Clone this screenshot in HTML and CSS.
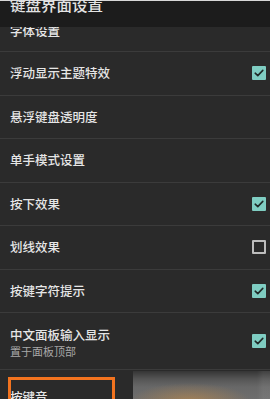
FILE: index.html
```html
<!DOCTYPE html>
<html lang="zh">
<head>
<meta charset="utf-8">
<link rel="stylesheet" href="styles.css">
</head>
<body>
<div class="screen">
  <div class="header"><div class="title">键盘界面设置</div></div>
  <div class="list">
    <div class="row first"><span class="label">字体设置</span></div>
    <div class="row"><span class="label">浮动显示主题特效</span><span class="box checked"><svg viewBox="0 0 14 14"><path d="M3.2 7.2 L5.8 9.6 L10.8 4.4" fill="none" stroke="#1f2a28" stroke-width="1.6" stroke-linecap="round" stroke-linejoin="round"/></svg></span></div>
    <div class="row"><span class="label">悬浮键盘透明度</span></div>
    <div class="row"><span class="label">单手模式设置</span></div>
    <div class="row"><span class="label">按下效果</span><span class="box checked"><svg viewBox="0 0 14 14"><path d="M3.2 7.2 L5.8 9.6 L10.8 4.4" fill="none" stroke="#1f2a28" stroke-width="1.6" stroke-linecap="round" stroke-linejoin="round"/></svg></span></div>
    <div class="row"><span class="label">划线效果</span><span class="box"></span></div>
    <div class="row"><span class="label">按键字符提示</span><span class="box checked"><svg viewBox="0 0 14 14"><path d="M3.2 7.2 L5.8 9.6 L10.8 4.4" fill="none" stroke="#1f2a28" stroke-width="1.6" stroke-linecap="round" stroke-linejoin="round"/></svg></span></div>
    <div class="row tall"><div class="texts"><span class="label">中文面板输入显示</span><span class="sub">置于面板顶部</span></div><span class="box checked"><svg viewBox="0 0 14 14"><path d="M3.2 7.2 L5.8 9.6 L10.8 4.4" fill="none" stroke="#1f2a28" stroke-width="1.6" stroke-linecap="round" stroke-linejoin="round"/></svg></span></div>
    <div class="row last"><span class="label">按键音</span><div class="blur"></div></div>
  </div>
  <div class="highlight"></div>
</div>
</body>
</html>
```
FILE: styles.css
```css
html, body {
  margin: 0;
  padding: 0;
  background: #2a2a2a;
}
body {
  font-family: "Noto Sans CJK SC", "Noto Sans", sans-serif;
  color: #e6e6e6;
}
.screen {
  position: relative;
  width: 270px;
  height: 399px;
  overflow: hidden;
  background: #2a2a2a;
}
.header {
  position: absolute;
  left: 0;
  top: 0;
  width: 270px;
  height: 27px;
  background: #1c1c1c;
  border-top: 1px solid #d8d8d8;
  box-sizing: border-box;
  z-index: 2;
}
.title {
  margin: -5px 0 0 10px;
  font-size: 15.5px;
  line-height: 16px;
  font-weight: 500;
  color: #e4e4e4;
}
.list {
  padding-top: 8.5px;
}
.row {
  height: 43.5px;
  box-sizing: border-box;
  border-bottom: 1px solid #3b3b3b;
  display: flex;
  align-items: center;
  justify-content: space-between;
  padding: 0 4px 0 10px;
}
.row.first {
  align-items: flex-end;
  padding-bottom: 13px;
}
.label {
  font-size: 12.5px;
  line-height: 14px;
  font-weight: 500;
  color: #e6e6e6;
}
.row.tall {
  height: 57px;
}
.texts {
  display: flex;
  flex-direction: column;
  gap: 3px;
  padding-top: 3px;
}
.sub {
  font-size: 11px;
  line-height: 12px;
  color: #a8a8a8;
}
.box {
  width: 14px;
  height: 14px;
  box-sizing: border-box;
  border: 2px solid #bdbdbd;
  border-radius: 1px;
  display: flex;
}
.box.checked {
  border: none;
  background: #7fcdc2;
}
.box svg {
  width: 14px;
  height: 14px;
}
.row.last {
  position: relative;
  align-items: flex-start;
  padding-top: 20px;
  border-bottom: none;
}
.blur {
  position: absolute;
  left: 133px;
  top: 1px;
  right: 0;
  bottom: 0;
  background:
    radial-gradient(ellipse 60px 18px at 57px 30px, rgba(196,140,72,0.6), rgba(196,140,72,0) 100%),
    linear-gradient(to right, rgba(0,0,0,0) 124px, rgba(255,255,255,0.06) 130px),
    linear-gradient(to bottom, #353535 0px, #555555 8px, #686868 16px, #6e6e6e 28px);
}
.highlight {
  position: absolute;
  left: 8px;
  top: 377px;
  width: 107px;
  height: 40px;
  box-sizing: border-box;
  border: 3px solid #f2731f;
  z-index: 3;
}
```
